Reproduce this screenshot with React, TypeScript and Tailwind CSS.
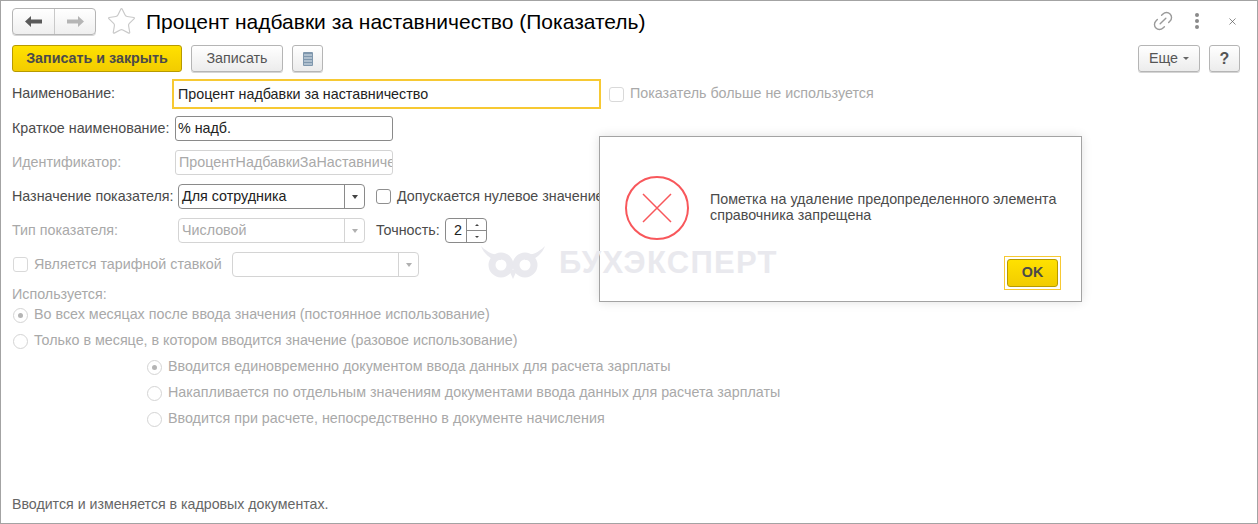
import { Link2, Star, X } from "lucide-react";

const font = "font-['Liberation_Sans',Arial,sans-serif]";

const Arrow = ({ className }: { className: string }) => (
  <svg width="17" height="11" viewBox="0 0 17 11" className={className}>
    <path d="M0 5.5 6 0v3.5h11v4H6V11z" fill="currentColor" />
  </svg>
);

const Label = ({ children, off, className = "w-[163px]" }: { children: string; off?: boolean; className?: string }) => (
  <span className={`${className} shrink-0 ${off ? "text-[#a9a9a9]" : "text-[#4b4b4b]"}`}>{children}</span>
);

const Check = ({ off }: { off?: boolean }) => (
  <span className={`block w-[15px] h-[15px] shrink-0 rounded-[3px] border bg-white ${off ? "border-[#d9d9d9]" : "border-[#8f8f8f]"}`} />
);

const Radio = ({ on, text }: { on?: boolean; text: string }) => (
  <div className="h-[26px] flex items-center gap-[6px] pl-[1px] text-[#a9a9a9]">
    <span className="w-[15px] h-[15px] rounded-full border border-[#d4d4d4] bg-white flex items-center justify-center">
      {on && <span className="w-[5px] h-[5px] rounded-full bg-[#b5b5b5]" />}
    </span>
    {text}
  </div>
);

const Combo = ({ text, off, className }: { text?: string; off?: boolean; className: string }) => (
  <div className={`${className} h-[25px] flex rounded-[4px] border bg-white ${off ? "border-[#d4d4d4] text-[#a9a9a9]" : "border-[#8a8a8a] text-[#222]"}`}>
    <span className="flex-1 pl-[3px] leading-[23px]">{text}</span>
    <span className={`w-[20px] border-l flex items-center justify-center ${off ? "border-[#d4d4d4]" : "border-[#8a8a8a]"}`}>
      <span className={`border-x-[3px] border-x-transparent border-t-[4px] ${off ? "border-t-[#b0b0b0]" : "border-t-[#444]"}`} />
    </span>
  </div>
);

const btn = "h-[27px] rounded-[3px] border border-[#b5b5b5] bg-gradient-to-b from-white to-[#ececec] text-[#555] shadow-[0_1px_0_#d5d5d5] flex items-center justify-center";

export default function App() {
  return (
    <div className={`${font} relative w-[1258px] h-[524px] overflow-hidden bg-white border border-[#a3a3a3] text-[14.3px] flex flex-col pl-[11px] pr-[10px]`}>
      {/* title */}
      <div className="h-[40px] mb-[4px] flex items-center shrink-0">
        <div className="w-[84px] h-[27px] flex rounded-[4px] border border-[#b5b5b5] bg-gradient-to-b from-white to-[#efefef] shadow-[0_1px_0_#d5d5d5]">
          <span className="w-[42px] border-r border-[#c9c9c9] flex items-center justify-center">
            <Arrow className="text-[#5a5a5a]" />
          </span>
          <span className="flex-1 flex items-center justify-center">
            <Arrow className="text-[#b5b5b5] -scale-x-100" />
          </span>
        </div>
        <Star size={31} strokeWidth={0.9} className="ml-[10px] text-[#c9c9c9]" />
        <h1 className="ml-[9px] text-[21px] leading-none text-black">Процент надбавки за наставничество (Показатель)</h1>
        <div className="ml-auto flex items-center text-[#9a9a9a]">
          <Link2 size={24} strokeWidth={1.4} className="-rotate-45" />
          <span className="ml-[20px] flex flex-col gap-[2px]">
            <i className="w-[4px] h-[4px] rounded-full bg-[#8a8a8a]" />
            <i className="w-[4px] h-[4px] rounded-full bg-[#8a8a8a]" />
            <i className="w-[4px] h-[4px] rounded-full bg-[#8a8a8a]" />
          </span>
          <X size={11} strokeWidth={1.5} className="ml-[28px] mr-[9px] text-[#555]" />
        </div>
      </div>

      {/* toolbar */}
      <div className="h-[27px] flex items-center shrink-0">
        <button className="w-[170px] h-[27px] rounded-[3px] border border-[#b79a00] bg-gradient-to-b from-[#ffe100] to-[#f2cc00] font-bold text-[#4a4a4a]">Записать и закрыть</button>
        <button className={`${btn} w-[92px] ml-[9px]`}>Записать</button>
        <button className={`${btn} w-[31px] ml-[9px]`}>
          <svg width="10" height="14" viewBox="0 0 10 14">
            <rect width="10" height="14" rx="1" fill="#7f97ad" />
            <path d="M1 3h8M1 6h8M1 9h8M1 12h8" stroke="#dfe7ee" />
          </svg>
        </button>
        <button className={`${btn} w-[62px] ml-auto gap-[5px]`}>
          Еще
          <span className="border-x-[3px] border-x-transparent border-t-[3px] border-t-[#666]" />
        </button>
        <button className={`${btn} w-[31px] ml-[9px] mr-[7px] text-[#333] text-[16px] font-bold`}>?</button>
      </div>

      {/* form */}
      <div className="flex items-center h-[30px] mt-[7px] shrink-0">
        <Label className="w-[160px]">Наименование:</Label>
        <div className="w-[429px] h-[30px] border-2 border-[#f7c933] pl-[4px] leading-[26px] text-[#222]">Процент надбавки за наставничество</div>
        <span className="ml-[8px]"><Check off /></span>
        <span className="ml-[6px] text-[#a9a9a9]">Показатель больше не используется</span>
      </div>
      <div className="flex items-center h-[25px] mt-[7px] shrink-0">
        <Label>Краткое наименование:</Label>
        <div className="w-[218px] h-[25px] rounded-[3px] border border-[#8a8a8a] pl-[2px] leading-[23px] text-[#222]">% надб.</div>
      </div>
      <div className="flex items-center h-[25px] mt-[9px] shrink-0">
        <Label off>Идентификатор:</Label>
        <div className="w-[218px] h-[25px] rounded-[3px] border border-[#d4d4d4] pl-[3px] leading-[23px] text-[#a9a9a9] overflow-hidden whitespace-nowrap">ПроцентНадбавкиЗаНаставничество</div>
      </div>
      <div className="flex items-center h-[25px] mt-[9px] shrink-0">
        <Label className="w-[166px]">Назначение показателя:</Label>
        <Combo text="Для сотрудника" className="w-[187px]" />
        <span className="ml-[11px]"><Check /></span>
        <span className="ml-[6px] text-[#4b4b4b]">Допускается нулевое значение</span>
      </div>
      <div className="flex items-center h-[25px] mt-[9px] shrink-0">
        <Label off className="w-[166px]">Тип показателя:</Label>
        <Combo text="Числовой" off className="w-[187px]" />
        <span className="ml-[11px] w-[63px] text-[#4b4b4b] whitespace-nowrap">Точность:</span>
        <div className="ml-[6px] w-[42px] h-[25px] flex rounded-[4px] border border-[#8a8a8a]">
          <span className="w-[16px] text-right leading-[23px] text-[#222]">2</span>
          <span className="ml-[4px] flex-1 border-l border-[#8a8a8a] flex flex-col">
            <span className="flex-1 border-b border-[#8a8a8a] flex items-center justify-center">
              <i className="border-x-[2px] border-x-transparent border-b-[2px] border-b-[#444]" />
            </span>
            <span className="flex-1 flex items-center justify-center">
              <i className="border-x-[2px] border-x-transparent border-t-[2px] border-t-[#444]" />
            </span>
          </span>
        </div>
      </div>
      <div className="flex items-center h-[25px] mt-[9px] shrink-0 pl-[1px]">
        <Check off />
        <span className="ml-[6px] w-[198px] text-[#a9a9a9]">Является тарифной ставкой</span>
        <Combo off className="w-[187px]" />
      </div>
      <div className="mt-[8px] mb-[-1px] h-[18px] leading-[18px] text-[#a9a9a9] shrink-0">Используется:</div>
      <Radio on text="Во всех месяцах после ввода значения (постоянное использование)" />
      <Radio text="Только в месяце, в котором вводится значение (разовое использование)" />
      <div className="pl-[134px]">
        <Radio on text="Вводится единовременно документом ввода данных для расчета зарплаты" />
        <Radio text="Накапливается по отдельным значениям документами ввода данных для расчета зарплаты" />
        <Radio text="Вводится при расчете, непосредственно в документе начисления" />
      </div>
      <div className="mt-auto mb-[8px] text-[14.2px] text-[#666]">Вводится и изменяется в кадровых документах.</div>

      {/* message dialog */}
      <div className="absolute left-[598px] top-[135px] w-[483px] h-[166px] bg-white border border-[#a3a3a3] shadow-[0_0_10px_rgba(0,0,0,0.12)]">
        <div className="flex items-start pt-[39px] pl-[25px]">
          <svg width="64" height="64" viewBox="0 0 64 64" fill="none" stroke="#f8575b" className="shrink-0">
            <circle cx="32" cy="32" r="31" strokeWidth="2" />
            <path d="M18 18l28 28M46 18 18 46" strokeWidth="1.5" />
          </svg>
          <p className="ml-[21px] mt-[15px] leading-[16px] text-[#4b4b4b]">Пометка на удаление предопределенного элемента<br />справочника запрещена</p>
        </div>
        <div className="absolute right-[20px] bottom-[11px] w-[57px] h-[34px] border border-[#f7c933] p-[2px]">
          <button className="w-full h-full rounded-[3px] border border-[#b79a00] bg-gradient-to-b from-[#ffe100] to-[#f2cc00] font-bold text-[#4a4a4a]">OK</button>
        </div>
      </div>

      {/* watermark lies over the dialog too */}
      <div className="absolute left-[479px] top-[244px] flex items-center gap-[13px] text-[#e9e9ee] pointer-events-none">
        <svg width="66" height="34" viewBox="0 0 66 34" fill="none">
          <path d="M1 1c7 7 13 9 20 9v5H14C8 12 3 7 1 1zM65 1c-7 7-13 9-20 9v5h7c6-3 11-8 13-14z" fill="currentColor" />
          <circle cx="21" cy="20" r="9" stroke="currentColor" strokeWidth="7" />
          <circle cx="45" cy="20" r="9" stroke="currentColor" strokeWidth="7" />
          <path d="M29 25h8l-4 9z" fill="currentColor" />
        </svg>
        <span className="text-[31px] leading-none font-bold tracking-[1.3px]">БУХЭКСПЕРТ</span>
      </div>
    </div>
  );
}
